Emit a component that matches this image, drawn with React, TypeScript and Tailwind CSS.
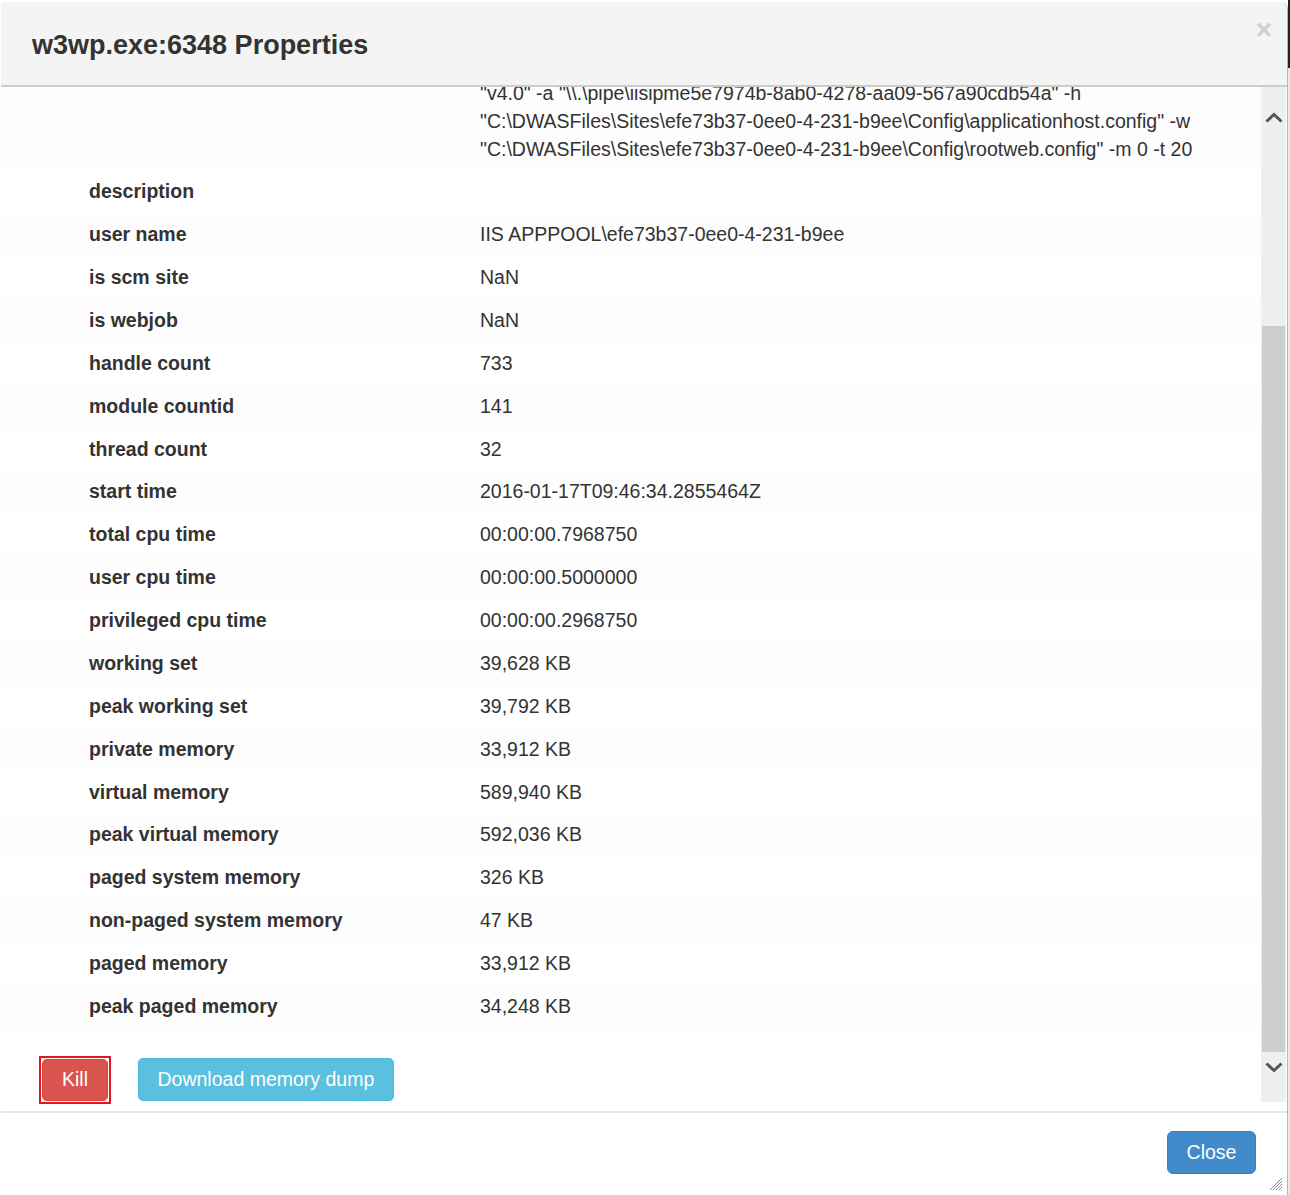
import React from "react";

const rows: [string, string][] = [
  ["description", ""],
  ["user name", "IIS APPPOOL\\efe73b37-0ee0-4-231-b9ee"],
  ["is scm site", "NaN"],
  ["is webjob", "NaN"],
  ["handle count", "733"],
  ["module countid", "141"],
  ["thread count", "32"],
  ["start time", "2016-01-17T09:46:34.2855464Z"],
  ["total cpu time", "00:00:00.7968750"],
  ["user cpu time", "00:00:00.5000000"],
  ["privileged cpu time", "00:00:00.2968750"],
  ["working set", "39,628 KB"],
  ["peak working set", "39,792 KB"],
  ["private memory", "33,912 KB"],
  ["virtual memory", "589,940 KB"],
  ["peak virtual memory", "592,036 KB"],
  ["paged system memory", "326 KB"],
  ["non-paged system memory", "47 KB"],
  ["paged memory", "33,912 KB"],
  ["peak paged memory", "34,248 KB"],
];

const cmdLines = [
  'd:\\windows\\system32\\inetsrv\\w3wp.exe -ap "efe73b37-0ee0-4-231-b9ee" -v',
  '"v4.0" -a "\\\\.\\pipe\\iisipme5e7974b-8ab0-4278-aa09-567a90cdb54a" -h',
  '"C:\\DWASFiles\\Sites\\efe73b37-0ee0-4-231-b9ee\\Config\\applicationhost.config" -w',
  '"C:\\DWASFiles\\Sites\\efe73b37-0ee0-4-231-b9ee\\Config\\rootweb.config" -m 0 -t 20',
];

function Chevron({ up }: { up: boolean }) {
  return (
    <svg width="18" height="11" viewBox="0 0 18 11">
      <polyline
        points={up ? "1.5,9.5 9,2.5 16.5,9.5" : "1.5,1.5 9,8.5 16.5,1.5"}
        fill="none"
        stroke="#555"
        strokeWidth="3"
      />
    </svg>
  );
}

export default function App() {
  return (
    <div className="w-[1290px] h-[1195px] bg-white flex overflow-hidden font-['Liberation_Sans',Arial,sans-serif] text-[#333]">
      <div className="w-[1287px] ml-[1px] mt-[2px] flex flex-col border-r border-[#b5b5b5] rounded-tr-[7px] overflow-hidden bg-white">
        {/* header */}
        <div className="h-[85px] shrink-0 bg-[#f4f4f4] border-b-2 border-[#cccccc] flex justify-between pl-[31px] pr-[15px]">
          <div className="h-[83px] pt-[3px] flex items-center text-[27px] font-bold text-[#333] leading-none">
            w3wp.exe:6348 Properties
          </div>
          <div className="mt-[13px] text-[28px] font-bold text-[#cfcfcf] leading-[30px]">×</div>
        </div>

        {/* body */}
        <div className="h-[1024px] shrink-0 flex">
          <div className="flex-1 overflow-hidden">
            <div className="mt-[-42.5px]">
              <div className="flex bg-[#fdfdfd] pt-[6px] pb-[8px] pl-[88px] text-[19.5px] leading-[28px]">
                <div className="w-[391px] font-bold">command line</div>
                <div className="whitespace-nowrap">
                  {cmdLines.map((l, i) => (
                    <div key={i}>{l}</div>
                  ))}
                </div>
              </div>
              {rows.map(([k, v], i) => (
                <div
                  key={k}
                  className={
                    "flex items-center h-[42.875px] pl-[88px] text-[19.5px] " +
                    (i % 2 === 1 ? "bg-[#fdfdfd]" : "bg-white")
                  }
                >
                  <div className="w-[391px] font-bold">{k}</div>
                  <div>{v}</div>
                </div>
              ))}
              <div className="flex items-center gap-[30px] pl-[41px] mt-[30px]">
                <div className="outline-2 outline-[#e3161d] outline-offset-[1px]">
                  <button className="h-[42px] px-[19px] bg-[#d9534f] border border-[#d43f3a] rounded-[5px] text-white text-[19.5px] leading-none">
                    Kill
                  </button>
                </div>
                <button className="h-[43px] px-[18.5px] bg-[#5bc0de] border border-[#46b8da] rounded-[5px] text-white text-[19.5px] leading-none">
                  Download memory dump
                </button>
              </div>
            </div>
          </div>
          {/* scrollbar */}
          <div className="w-[25px] h-[1015px] bg-[#efefef] flex flex-col items-center mr-[1px]">
            <div className="mt-[25px]">
              <Chevron up />
            </div>
            <div className="mt-[203px] w-[23px] h-[726px] bg-[#cdcdcd]" />
            <div className="mt-[10px]">
              <Chevron up={false} />
            </div>
          </div>
        </div>

        {/* footer */}
        <div className="flex-1 border-t-2 border-[#e5e5e5] flex flex-col">
          <div className="flex justify-end pr-[31px] pt-[18px]">
            <button className="h-[43px] w-[89px] bg-[#428bca] border border-[#357ebd] rounded-[6px] text-white text-[19.5px] leading-none">
              Close
            </button>
          </div>
          <div className="flex justify-end pr-[4px] mt-[3px]">
            <svg width="14" height="14" viewBox="0 0 14 14">
              <line x1="13" y1="1" x2="1" y2="13" stroke="#888" strokeWidth="1" />
              <line x1="13" y1="4" x2="4" y2="13" stroke="#888" strokeWidth="1" />
              <line x1="13" y1="7" x2="7" y2="13" stroke="#888" strokeWidth="1" />
              <line x1="13" y1="10" x2="10" y2="13" stroke="#888" strokeWidth="1" />
            </svg>
          </div>
        </div>
      </div>
      <div className="w-[2px] flex flex-col">
        <div className="h-[68px] bg-[#222]" />
        <div className="flex-1 bg-[#e8e8e8]" />
      </div>
    </div>
  );
}
